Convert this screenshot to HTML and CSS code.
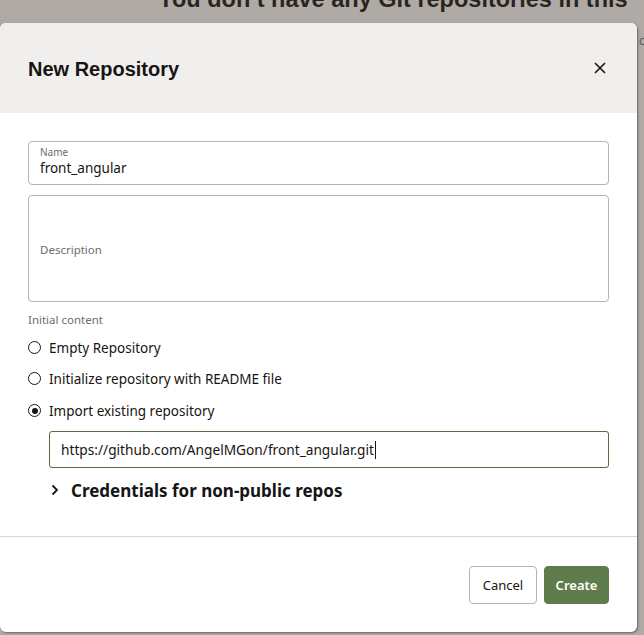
FILE: index.html
```html
<!DOCTYPE html>
<html lang="en">
<head>
<meta charset="utf-8">
<title>New Repository</title>
<link rel="stylesheet" href="styles.css">
</head>
<body>
<div class="page">
  <h1 class="page-title">You don’t have any Git repositories in this</h1>
  <span class="page-side">c</span>
</div>
<div class="scrim"></div>
<div class="dialog" role="dialog" aria-labelledby="dlg-title">
  <header class="dialog-header">
    <h2 id="dlg-title" class="dialog-title">New Repository</h2>
    <button class="close-btn" aria-label="Close">
      <svg width="12" height="12" viewBox="0 0 12 12"><path d="M1 1L11 11M11 1L1 11" stroke="#161513" stroke-width="1.6" fill="none"/></svg>
    </button>
  </header>
  <div class="dialog-body">
    <div class="field field-name">
      <span class="field-label">Name</span>
      <span class="field-value">front_angular</span>
    </div>
    <div class="field field-desc">
      <span class="field-placeholder">Description</span>
    </div>
    <div class="section-label">Initial content</div>
    <div class="radio-group">
      <div class="radio-row"><span class="radio"></span><span class="radio-text">Empty Repository</span></div>
      <div class="radio-row"><span class="radio"></span><span class="radio-text">Initialize repository with README file</span></div>
      <div class="radio-row"><span class="radio checked"></span><span class="radio-text">Import existing repository</span></div>
    </div>
    <div class="url-input"><span class="url-text">https://github.com/AngelMGon/front_angular.git</span><span class="caret"></span></div>
    <div class="cred-row">
      <svg class="chev" width="10" height="12" viewBox="0 0 10 12"><path d="M2.5 1.5L7 6L2.5 10.5" stroke="#161513" stroke-width="1.8" fill="none"/></svg>
      <span class="cred-text">Credentials for non-public repos</span>
    </div>
  </div>
  <footer class="dialog-footer">
    <button class="btn btn-secondary">Cancel</button>
    <button class="btn btn-primary">Create</button>
  </footer>
</div>
</body>
</html>
```
FILE: styles.css
```css
html, body {
  margin: 0;
  padding: 0;
  height: 100%;
  overflow: hidden;
}
body {
  background: #fcfbfa;
  font-family: "Noto Sans", "Open Sans", sans-serif;
  color: #161513;
  position: relative;
}
.page {
  position: relative;
  height: 100%;
}
.page-title {
  margin: 0;
  position: absolute;
  left: 158px;
  top: -16px;
  white-space: nowrap;
  font-family: "Liberation Sans", sans-serif;
  font-size: 23.5px;
  line-height: 30px;
  font-weight: bold;
  color: #161513;
}
.page-side {
  position: absolute;
  left: 639px;
  top: 32px;
  font-size: 12px;
  color: #6f6f6f;
}
.scrim {
  position: absolute;
  inset: 0;
  background: rgba(70, 58, 48, 0.42);
}
.dialog {
  position: absolute;
  left: 0;
  top: 23px;
  width: 637px;
  height: 609px;
  background: #ffffff;
  border-radius: 6px;
  box-shadow: 1px 1px 2px rgba(0, 0, 0, 0.4);
  display: flex;
  flex-direction: column;
  overflow: hidden;
}
.dialog-header {
  height: 90px;
  flex: none;
  box-sizing: border-box;
  padding: 0 28px;
  background: #f1efed;
  display: flex;
  align-items: center;
  justify-content: space-between;
}
.dialog-title {
  margin: 0;
  font-family: "Liberation Sans", sans-serif;
  font-size: 20px;
  font-weight: bold;
  color: #161513;
  padding-top: 2px;
}
.close-btn {
  border: 0;
  background: transparent;
  padding: 0;
  width: 16px;
  height: 16px;
  margin-right: 1px;
  display: flex;
  align-items: center;
  justify-content: center;
  cursor: pointer;
}
.dialog-body {
  height: 424px;
  flex: none;
  box-sizing: border-box;
  padding: 28px 28px 0 28px;
  border-bottom: 1px solid #d8d6d4;
  display: flex;
  flex-direction: column;
}
.field {
  border: 1px solid #b5b3b1;
  border-radius: 4px;
  box-sizing: border-box;
  padding: 0 11px;
}
.field-name {
  height: 44px;
  display: flex;
  flex-direction: column;
  justify-content: center;
}
.field-label {
  font-size: 10px;
  line-height: 12px;
  color: #6f6c69;
  margin-top: -2px;
}
.field-value {
  font-size: 13.5px;
  line-height: 20px;
  color: #161513;
}
.field-desc {
  height: 107px;
  margin-top: 10px;
  display: flex;
  align-items: center;
}
.field-placeholder {
  font-size: 11.5px;
  color: #6f6c69;
  margin-top: 2px;
}
.section-label {
  margin-top: 10px;
  font-size: 11.5px;
  line-height: 16px;
  color: #6f6c69;
}
.radio-group {
  display: flex;
  flex-direction: column;
  margin-top: 4px;
}
.radio-row {
  height: 31px;
  display: flex;
  align-items: center;
  gap: 8px;
}
.radio-row:nth-child(3) { height: 33px; }
.radio {
  width: 13px;
  height: 13px;
  box-sizing: border-box;
  border: 1.5px solid #161513;
  border-radius: 50%;
  display: flex;
  align-items: center;
  justify-content: center;
  flex: none;
}
.radio.checked::after {
  content: "";
  width: 6px;
  height: 6px;
  border-radius: 50%;
  background: #161513;
}
.radio-text {
  font-size: 13.5px;
  color: #161513;
}
.url-input {
  margin-left: 21px;
  margin-top: 4px;
  height: 37px;
  box-sizing: border-box;
  border: 1px solid #566b45;
  border-radius: 3px;
  padding: 0 11px;
  display: flex;
  align-items: center;
}
.url-text {
  font-size: 13.7px;
  color: #161513;
}
.caret {
  width: 1px;
  height: 18px;
  background: #161513;
  margin-left: 1px;
}
.cred-row {
  margin-top: 10px;
  margin-left: 22px;
  height: 24px;
  display: flex;
  align-items: center;
  gap: 11px;
}
.cred-text {
  font-family: "Noto Sans", sans-serif;
  font-size: 17px;
  font-weight: bold;
  color: #161513;
}
.dialog-footer {
  flex: 1;
  display: flex;
  justify-content: flex-end;
  align-items: flex-start;
  gap: 7px;
  padding: 28px 28px 0 0;
}
.btn {
  height: 38px;
  box-sizing: border-box;
  border-radius: 4px;
  font-family: "Noto Sans", sans-serif;
  font-size: 13px;
  padding: 0;
  cursor: pointer;
}
.btn-secondary {
  background: #ffffff;
  border: 1px solid #b5b3b1;
  color: #161513;
  width: 68px;
  margin-top: 1px;
}
.btn-primary {
  background: #5f7c4c;
  border: 1px solid #5f7c4c;
  color: #ffffff;
  font-weight: 600;
  width: 65px;
  margin-top: 1px;
}
```
